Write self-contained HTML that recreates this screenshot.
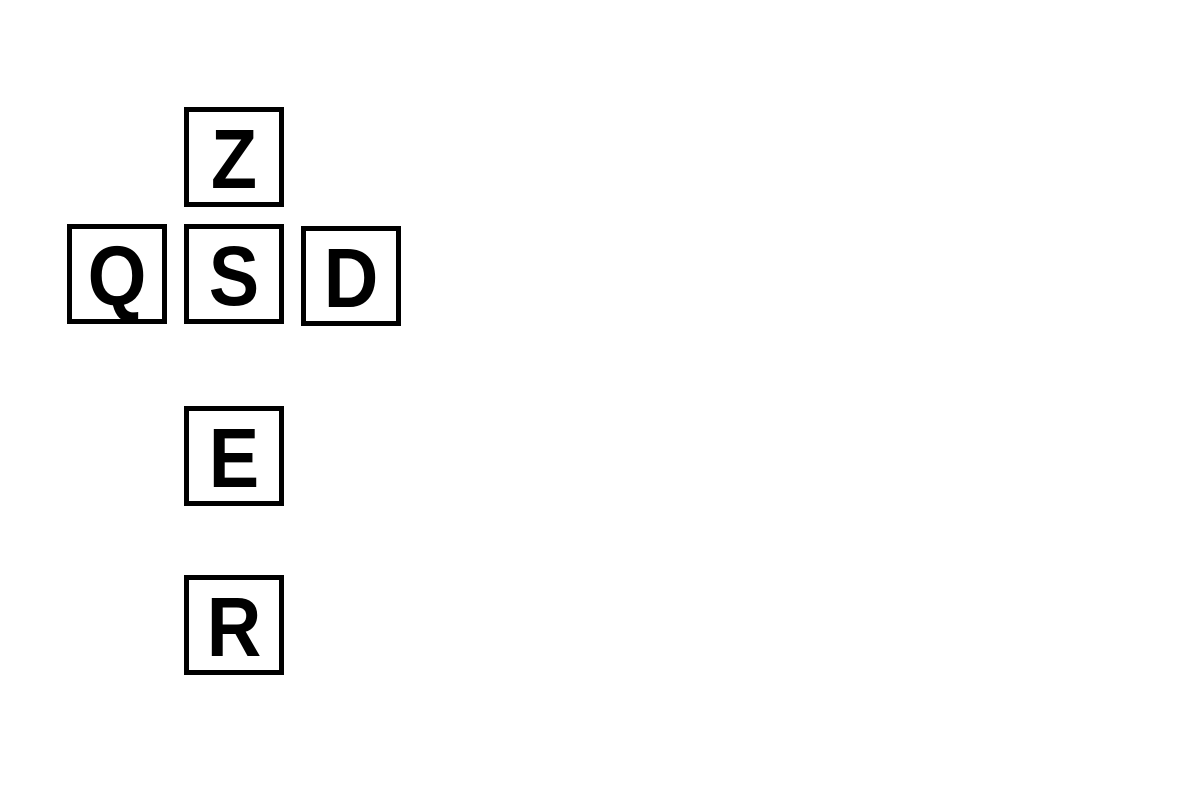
<!DOCTYPE html>
<html><head><style>
body{margin:0;width:1200px;height:800px;background:#fff;position:relative;overflow:hidden}
.k{position:absolute;width:90px;height:90px;border:5px solid #000;box-sizing:content-box;}
.k span{position:absolute;left:0;right:0;top:0;text-align:center;font:bold 84px/90px "Liberation Sans",sans-serif;transform:scaleX(0.9);color:#000;margin-top:2px}
</style></head><body>
<div class="k" style="left:184px;top:107px"><span>Z</span></div>
<div class="k" style="left:67px;top:224px"><span>Q</span></div>
<div class="k" style="left:184px;top:224px"><span>S</span></div>
<div class="k" style="left:301px;top:226px"><span>D</span></div>
<div class="k" style="left:184px;top:406px"><span>E</span></div>
<div class="k" style="left:184px;top:575px"><span>R</span></div>
</body></html>
